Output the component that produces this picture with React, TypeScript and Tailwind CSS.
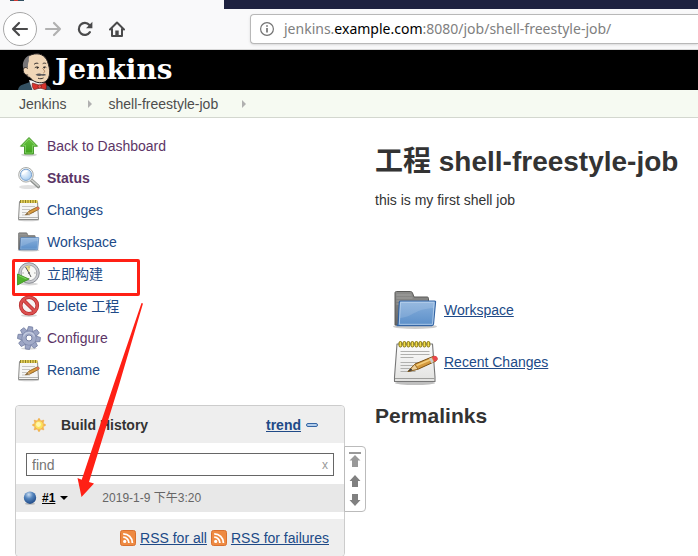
import React from "react";

const cjk = "font-['Liberation_Sans','Noto_Sans_CJK_SC',sans-serif]";

function BackIcon() {
  return (
    <svg width="18" height="16" viewBox="0 0 18 16" fill="none" stroke="currentColor" strokeWidth="2.2" strokeLinecap="round" strokeLinejoin="round">
      <path d="M16 8H2M8 2L2 8l6 6" />
    </svg>
  );
}

function ForwardIcon() {
  return (
    <svg width="18" height="16" viewBox="0 0 18 16" fill="none" stroke="currentColor" strokeWidth="2.2" strokeLinecap="round" strokeLinejoin="round">
      <path d="M2 8h14M10 2l6 6-6 6" />
    </svg>
  );
}

function ReloadIcon() {
  return (
    <svg width="16" height="16" viewBox="0 0 16 16" fill="none" stroke="currentColor" strokeWidth="2.2">
      <path d="M12.9 11.2A6 6 0 1 1 12.4 4" strokeLinecap="round" />
      <path d="M15.4 .8v6.400H9z" fill="currentColor" stroke="none" />
    </svg>
  );
}

function HomeIcon() {
  return (
    <svg width="16" height="16" viewBox="0 0 16 16" fill="none" stroke="currentColor" strokeWidth="2" strokeLinejoin="round" strokeLinecap="round">
      <path d="M1 8.500L8 1.500l7 7M3 8v7h10V8" />
      <path d="M6.300 14.500V9.500h3.400v5z" fill="currentColor" stroke="none" />
    </svg>
  );
}

function InfoIcon() {
  return (
    <svg width="14" height="14" viewBox="0 0 14 14" fill="none" stroke="#737373">
      <circle cx="7" cy="7" r="6.400" strokeWidth="1.200" />
      <path d="M7 6v4.500M7 3.300v1.500" strokeWidth="1.700" />
    </svg>
  );
}

function Butler() {
  return (
    <svg width="34" height="37" viewBox="0 0 34 37" aria-hidden="true">
      <path d="M0 37c.5-3 2-4.500 5-5.500L12 29l14 2.500c4 .5 6.500 2.500 7 5.500z" fill="#335061" />
      <path d="M11 27l3.500 10H27l1-7z" fill="#f5f5f5" />
      <path d="M7 20C4 12 6 4 14 1.500c7-2 13 .5 15.500 7 1.500 4.500 2.500 8 2 12.500-.5 5-3.500 8.500-8 8.700-5 .3-9-1.700-11.500-5.200C9.500 24 8 22.500 7 20z" fill="#f0d6b7" stroke="#231f20" strokeWidth="1" />
      <path d="M5.200 15C4 10 6 4.500 11.500 2.200c-.5 2-1 3.800-.6 5.800-.8 2-1.200 4-.9 6.200l-1.500.2-2 1.800z" fill="#777577" />
      <path d="M10 15.500c-2.500-2-5-.8-4.700 2.200.3 3 2.300 4.600 4.900 4.400" fill="#f0d6b7" stroke="#231f20" strokeWidth=".9" />
      <path d="M16 11.500c1-1.400 2.800-1.700 4.300-1M24.700 10.700c1-.8 2.400-.8 3.500 0M16.800 14.800c1.400-1.200 3-1.100 4.200-.1M25 14.600c1-.9 2.300-.9 3.300-.1" fill="none" stroke="#231f20" strokeWidth=".9" />
      <circle cx="19.400" cy="14.900" r=".8" fill="#231f20" />
      <circle cx="26.300" cy="14.800" r=".8" fill="#231f20" />
      <path d="M24.500 15.500c2 1.800 3 3.400 1 4.500" fill="none" stroke="#a87c58" strokeWidth="1" />
      <path d="M17.500 21.800c2-1.400 4.300-1.600 6.500-.6 2-.6 3.500-.2 4.300.9-1.700.8-3 .9-4.500.5-2 .7-4.300.4-6.300-.8z" fill="#5c5a5c" />
      <path d="M20 25.200c2 .8 4 .6 5.500-.3" fill="none" stroke="#231f20" strokeWidth=".9" />
      <path d="M14.500 30l7 2.200 6-2.400c1.200 2 1.200 4.400.5 7L22 35l-6 1.800c-1.500-2-2.300-4.600-1.500-6.800z" fill="#d8322c" stroke="#5d1514" strokeWidth=".6" />
      <circle cx="21.700" cy="33.500" r="1.800" fill="#f0544e" stroke="#5d1514" strokeWidth=".6" />
    </svg>
  );
}

type IconProps = { size: number };

function UpArrowIcon({ size }: IconProps) {
  return (
    <svg width={size} height={size} viewBox="0 0 24 24">
      <defs>
        <linearGradient id="green" x1="0" y1="0" x2="0" y2="1">
          <stop offset="0" stopColor="#6cc644" />
          <stop offset="1" stopColor="#3da01c" />
        </linearGradient>
      </defs>
      <ellipse cx="12" cy="20.800" rx="8" ry="1.600" fill="#000" opacity=".18" />
      <path d="M12 3.500l8.500 8.700H16.500V20h-9v-7.800H3.500z" fill="url(#green)" stroke="#4a9a2e" strokeLinejoin="round" />
      <path d="M12 5l6.200 6.300H15.500V19h-7v-7.700H5.800z" fill="none" stroke="#8fdc74" strokeWidth=".7" />
    </svg>
  );
}

function SearchIcon({ size }: IconProps) {
  return (
    <svg width={size} height={size} viewBox="0 0 24 24">
      <defs>
        <radialGradient id="lens" cx=".35" cy=".3" r=".8">
          <stop offset="0" stopColor="#fff" />
          <stop offset="1" stopColor="#9cc6ee" />
        </radialGradient>
      </defs>
      <ellipse cx="11" cy="21" rx="9" ry="2" fill="#000" opacity=".12" />
      <path d="M14.500 14.200l6.800 6.300" stroke="#8c908d" strokeWidth="3.600" strokeLinecap="round" />
      <path d="M14.500 13.800l6.800 6.200" stroke="#cfd1ce" strokeWidth="1.600" strokeLinecap="round" />
      <circle cx="9" cy="8.800" r="7.300" fill="#f4f5f4" stroke="#a9aba8" />
      <circle cx="9" cy="8.800" r="5.600" fill="url(#lens)" stroke="#7ba3d0" />
      <path d="M5.500 8.500C6 6 8 4.800 10.500 5.300" fill="none" stroke="#fff" strokeWidth="1.500" />
    </svg>
  );
}

function SmallNotepadIcon({ size }: IconProps) {
  return (
    <svg width={size} height={size} viewBox="0 0 24 24">
      <ellipse cx="11.500" cy="22.300" rx="10.500" ry="1" fill="#000" opacity=".2" />
      <path d="M2.500 3.500h18l1 18h-20z" fill="#f5f5f4" stroke="#8c8c8a" strokeLinejoin="round" />
      <path d="M2 19.500h19" stroke="#b5b5b3" />
      <path d="M5 8.500h13M5 11.500h8M5 14.500h12M5 17h8" stroke="#c4c4c2" />
      <path d="M3 3.500h17.500" stroke="#e3cf58" strokeWidth="3" />
      <path d="M3 3.500h17.500" stroke="#8e7f22" strokeWidth="3" strokeDasharray="1 1.500" />
      <path d="M8.500 16.800l3.500-3.700 8-4c1.800-.8 3 1.500 1.300 2.500l-8.200 4.300z" fill="#d99c40" stroke="#855718" strokeWidth=".8" strokeLinejoin="round" />
      <path d="M8.500 16.800l3.200-3.400 1.500 2.400z" fill="#c9a672" />
      <path d="M8.500 16.800l2-1.500.5.800z" fill="#333" />
      <path d="M19.500 9.300c1.800-1.200 3.700.9 1.900 2.200l-1 .6z" fill="#e06a5a" />
    </svg>
  );
}

function NotepadIcon({ size }: IconProps) {
  return (
    <svg width={size} height={size} viewBox="0 0 48 48">
      <defs>
        <linearGradient id="paper" x1="0" y1="0" x2="0" y2="1">
          <stop offset="0" stopColor="#fcfcfc" />
          <stop offset="1" stopColor="#e2e2e0" />
        </linearGradient>
      </defs>
      <ellipse cx="23" cy="45" rx="20" ry="2" fill="#000" opacity=".25" />
      <path d="M5 6h35.500l2.500 33v4.500H2.500V39z" fill="url(#paper)" stroke="#777" strokeWidth="1.100" strokeLinejoin="round" />
      <path d="M3 40.500h39.500" stroke="#9d9d9b" />
      <path d="M8.500 13.500h29M8.500 16.500h29M8.500 19.500h13M8.500 24.500h29M8.500 27.500h22M8.500 30.500h16M8.500 33.500h15" stroke="#b0b0ae" />
      <g fill="#f1dc4c" stroke="#80700a">
        {[7, 11, 15, 19, 23, 27, 31, 35].map((x) => (
          <rect key={x} x={x} y="3.500" width="2.800" height="5.500" rx="1.400" />
        ))}
      </g>
      <path d="M16 33.500l7-7.500 18-7.500c3.500-1.200 5.500 3 2.600 4.700L26.500 31z" fill="#d59a3e" stroke="#7a4f12" strokeWidth="1" strokeLinejoin="round" />
      <path d="M24.500 27.500L40 21" stroke="#f3cd7b" strokeWidth="1.500" />
      <path d="M16 33.500l6.800-7.200 3.200 4.900z" fill="#edcf9a" stroke="#8c6121" strokeWidth=".8" />
      <path d="M16 33.500l3-3.200 1.400 2z" fill="#333" />
      <path d="M38.300 20l2.300 4.600" stroke="#ccc" strokeWidth="2.500" />
      <path d="M40 19l2-.9c3.200-1.200 5 2.900 2.300 4.600l-2 1.100z" fill="#e8474d" />
    </svg>
  );
}

function FolderIcon({ size }: IconProps) {
  return (
    <svg width={size} height={size} viewBox="0 0 48 48">
      <defs>
        <linearGradient id="folder" x1="0" y1="0" x2="0" y2="1">
          <stop offset="0" stopColor="#89b0dc" />
          <stop offset="1" stopColor="#5b8fc9" />
        </linearGradient>
        <linearGradient id="folderBack" x1="0" y1="0" x2="0" y2="1">
          <stop offset="0" stopColor="#8c8c8a" />
          <stop offset="1" stopColor="#666" />
        </linearGradient>
      </defs>
      <ellipse cx="23" cy="40.500" rx="22" ry="2.500" fill="#000" opacity=".2" />
      <path d="M3 39V7c0-1 .5-1.500 1.500-1.500h14c1 0 1.500.5 2 1.500l1.500 4h13c1 0 1.500.5 1.500 1.500V39z" fill="url(#folderBack)" stroke="#5b5b59" />
      <path d="M4.500 9h15M4.500 12h16M4.500 15h31M4.500 18h31" stroke="#b0b0ae" strokeWidth=".7" />
      <path d="M8.500 15h34c1 0 1.200.6 1 1.500L41.500 38c-.1 1-.6 1.600-1.700 1.600H4.500c1 0 1.500-.6 1.600-1.600l1.200-21.600c0-.9.400-1.400 1.200-1.400z" fill="url(#folder)" stroke="#3465a4" strokeWidth="1.200" />
      <path d="M8.500 16.300h33.700L40.500 38.300H7.300z" fill="none" stroke="#bcd4ee" strokeWidth=".8" />
      <path d="M8 32c13-1 14-9 34-10l-.5-5.500H8.700z" fill="#fff" opacity=".13" />
    </svg>
  );
}

function ClockIcon({ size }: IconProps) {
  return (
    <svg width={size} height={size} viewBox="0 0 24 24">
      <ellipse cx="12" cy="22" rx="9" ry="1.500" fill="#000" opacity=".15" />
      <circle cx="12" cy="11" r="10.300" fill="#c9cacf" stroke="#8c8f96" />
      <circle cx="12" cy="11" r="7.800" fill="#f7f7f5" stroke="#a3a5ab" />
      <path d="M12 11L8.500 4.300A7.500 7.500 0 0 1 13.500 3.700z" fill="#ecdf8a" />
      <path d="M12 4.500v1.200M18.500 11h-1.200M12 17.500v-1.200M5.500 11h1.200" stroke="#888" />
      <path d="M8.500 5l3.500 6 2 4" stroke="#555" fill="none" />
      <circle cx="12" cy="11" r="1.100" fill="#666" />
      <path d="M.5 12l11.500 5L.5 23z" fill="#4fb12c" stroke="#3a8e1e" strokeLinejoin="round" strokeWidth=".8" />
      <path d="M1.500 13.500l8 3.500" stroke="#8cdb70" strokeWidth=".8" />
    </svg>
  );
}

function DeleteIcon({ size }: IconProps) {
  return (
    <svg width={size} height={size} viewBox="0 0 24 24">
      <ellipse cx="12" cy="21.500" rx="8" ry="1.500" fill="#000" opacity=".16" />
      <circle cx="12" cy="11.500" r="8.300" fill="#f6f3f3" stroke="#b52a2a" strokeWidth="3.600" />
      <path d="M6.200 5.700l11.600 11.600" stroke="#b52a2a" strokeWidth="3.600" />
      <circle cx="12" cy="11.500" r="8.300" fill="none" stroke="#dc5050" strokeWidth="2.200" />
      <path d="M6.200 5.700l11.600 11.600" stroke="#dc5050" strokeWidth="2.200" />
    </svg>
  );
}

function GearIcon({ size }: IconProps) {
  const teeth = [0, 45, 90, 135, 180, 225, 270, 315];
  return (
    <svg width={size} height={size} viewBox="0 0 24 24">
      <ellipse cx="12" cy="22.500" rx="8" ry="1.200" fill="#000" opacity=".15" />
      <g fill="#9ca5c4" stroke="#7580a3" strokeWidth=".8" strokeLinejoin="round">
        {teeth.map((angle) => (
          <path key={angle} d="M8.900 6.500l1-5.800h4.200l1 5.800z" transform={`rotate(${angle + 8} 12 12)`} />
        ))}
        <circle cx="12" cy="12" r="7" />
      </g>
      <circle cx="12" cy="12" r="6.800" fill="#a2abc8" />
      <path d="M6.500 10.500A5.800 5.800 0 0 1 17.500 10.500" fill="none" stroke="#c5cce0" strokeWidth="1.200" />
      <circle cx="12" cy="12" r="3" fill="#fff" stroke="#7580a3" />
    </svg>
  );
}

function SunIcon() {
  const rays = [0, 45, 90, 135, 180, 225, 270, 315];
  return (
    <svg width="16" height="16" viewBox="0 0 16 16">
      {rays.map((angle) => (
        <path key={angle} d="M6.500 3.400L8 1l1.500 2.400z" fill="#f5b444" stroke="#f0a840" strokeWidth=".4" transform={`rotate(${angle} 8 8)`} />
      ))}
      <circle cx="8" cy="8" r="4.400" fill="#fce35a" stroke="#f4b455" />
      <circle cx="7.500" cy="7.500" r="2.400" fill="#fff6b0" />
    </svg>
  );
}

function BallIcon() {
  return (
    <svg width="14" height="14" viewBox="0 0 14 14">
      <defs>
        <radialGradient id="ball" cx=".4" cy=".25" r=".75">
          <stop offset="0" stopColor="#c9dcf0" />
          <stop offset=".45" stopColor="#5384bd" />
          <stop offset="1" stopColor="#204a87" />
        </radialGradient>
      </defs>
      <ellipse cx="7" cy="12.800" rx="5" ry="1" fill="#000" opacity=".2" />
      <circle cx="7" cy="6.700" r="6.200" fill="url(#ball)" />
    </svg>
  );
}

function RssIcon() {
  return (
    <svg width="16" height="16" viewBox="0 0 16 16">
      <rect x=".5" y=".5" width="15" height="15" rx="2" fill="#ee8a42" stroke="#d9702f" />
      <circle cx="4.700" cy="11.400" r="1.600" fill="#fff" />
      <path d="M3.200 7.200a5.700 5.700 0 0 1 5.700 5.700M3.200 3.800a9.200 9.200 0 0 1 9.200 9.100" fill="none" stroke="#fff" strokeWidth="1.800" />
    </svg>
  );
}

function Separator() {
  return (
    <svg width="4" height="8" viewBox="0 0 4 8" aria-hidden="true">
      <path d="M0 0l4 4-4 4z" fill="#b0b0b0" />
    </svg>
  );
}

type Task = { label: string; icon: (props: IconProps) => React.ReactElement; tone: string; marked?: boolean };

const tasks: Task[] = [
  { label: "Back to Dashboard", icon: UpArrowIcon, tone: "text-[#5c3566]" },
  { label: "Status", icon: SearchIcon, tone: "text-[#5c3566] font-bold" },
  { label: "Changes", icon: SmallNotepadIcon, tone: "text-[#204a87]" },
  { label: "Workspace", icon: FolderIcon, tone: "text-[#204a87]" },
  { label: "立即构建", icon: ClockIcon, tone: "text-[#204a87]", marked: true },
  { label: "Delete 工程", icon: DeleteIcon, tone: "text-[#204a87]" },
  { label: "Configure", icon: GearIcon, tone: "text-[#5c3566]" },
  { label: "Rename", icon: SmallNotepadIcon, tone: "text-[#204a87]" },
];

function BrowserChrome() {
  return (
    <header>
      <div className="flex h-[9px] bg-[#1e2240]">
        <div className="w-56 shrink-0 bg-[#f9f9fa] pl-[10px]">
          <div className="flex h-px w-[14px] bg-[#335061]">
            <span className="ml-1 w-1 bg-[#d33833]" />
          </div>
        </div>
      </div>
      <div className="flex h-[41px] items-center border-b border-[#d8d8d8] bg-[#f9f9fa] pl-[3px] text-[#4a4a4b]">
        <button aria-label="Back" className="flex size-[34px] shrink-0 items-center justify-center rounded-full border border-[#a8a8a8] bg-white">
          <BackIcon />
        </button>
        <button aria-label="Forward" className="flex w-8 shrink-0 justify-center text-[#b1b1b1]">
          <ForwardIcon />
        </button>
        <button aria-label="Reload" className="flex w-8 shrink-0 justify-center">
          <ReloadIcon />
        </button>
        <button aria-label="Home" className="flex w-8 shrink-0 justify-center">
          <HomeIcon />
        </button>
        <div className="ml-[117px] flex h-[30px] flex-1 items-center gap-[10px] overflow-hidden rounded-l-sm border border-r-0 border-[#b8b8b8] bg-white pl-[9px] shadow-sm">
          <InfoIcon />
          <div
            role="textbox"
            aria-label="Address"
            contentEditable
            suppressContentEditableWarning
            className="flex-1 whitespace-nowrap font-['Noto_Sans',sans-serif] text-[14px] leading-5 text-[#808080] outline-none"
          >
            jenkins.<span className="text-black">example.com</span>:8080/job/shell-freestyle-job/
          </div>
        </div>
      </div>
    </header>
  );
}

function BuildHistory() {
  return (
    <section className="relative mt-[19px] ml-[15px] rounded border border-[#ccc] bg-white">
      <div className="flex h-[37px] items-center rounded-t bg-[#eee] pr-[26px] pl-[15px] font-bold">
        <SunIcon />
        <h2 className="ml-[14px] flex-1">Build History</h2>
        <a href="#trend" className="text-[#204a87] underline">trend</a>
        <button aria-label="Collapse" className="ml-[5px] h-1 w-3 rounded-xs border border-[#3465a4] bg-[#b3cdea]" />
      </div>
      <div className="relative px-[10px] pt-[10px] pb-2">
        <input
          aria-label="find"
          placeholder="find"
          className="block h-[23px] w-full border border-[#666] bg-white pr-6 pl-[5px] text-[14px] placeholder:text-[#757575]"
        />
        <button aria-label="Clear" className="absolute top-[13px] right-4 text-[12px] leading-[18px] text-[#999]">x</button>
      </div>
      <div className="flex h-7 items-center bg-[#e8e8e8] pl-[7px]">
        <BallIcon />
        <a href="#1" className="ml-[5px] text-[12px] font-bold text-black underline">#1</a>
        <button aria-label="Build menu" className="ml-[5px]">
          <svg width="8" height="4" viewBox="0 0 8 4">
            <path d="M0 0h8L4 4z" fill="#000" />
          </svg>
        </button>
        <time className="ml-[34px] text-[12px] text-[#666]">2019-1-9 下午3:20</time>
      </div>
      <div className="mt-[7px] flex h-[37px] items-center justify-end gap-1 rounded-b bg-[#eee] pr-[15px]">
        <RssIcon />
        <a href="#all" className="text-[#204a87] underline">RSS for all</a>
        <RssIcon />
        <a href="#failures" className="text-[#204a87] underline">RSS for failures</a>
      </div>
      <div className="absolute top-10 left-full flex h-[66px] w-[22px] flex-col items-center justify-between rounded-r border border-[#bbb] bg-white py-[5px] text-[#808080]">
        <button aria-label="Newest builds" className="text-[#999]">
          <svg width="12" height="15" viewBox="0 0 12 15" fill="currentColor" className="block">
            <path d="M0 0h12v2H0zM6 3l5.500 5.500H9V15H3V8.500H.5z" />
          </svg>
        </button>
        <button aria-label="Newer builds">
          <svg width="12" height="12" viewBox="0 0 12 12" fill="currentColor" className="block">
            <path d="M6 0l5.500 6H9v6H3V6H.5z" />
          </svg>
        </button>
        <button aria-label="Older builds">
          <svg width="12" height="12" viewBox="0 0 12 12" fill="currentColor" className="block">
            <path d="M6 12l5.500-6H9V0H3v6H.5z" />
          </svg>
        </button>
      </div>
    </section>
  );
}

export default function App() {
  return (
    <div className={`min-h-screen overflow-x-hidden bg-white text-[14px] leading-5 text-[#333] ${cjk}`}>
      <BrowserChrome />
      <div className="flex h-10 items-end bg-black pl-[18px]">
        <a href="#home" className="flex items-end text-white">
          <Butler />
          <span className="ml-[3px] font-['DejaVu_Serif',serif] text-[28px] leading-[40px] font-bold">Jenkins</span>
        </a>
      </div>
      <nav className="flex h-7 items-center border-b border-[#d3d7cf] bg-[#f6faf2] pl-[19px] text-[#4d4d4d]">
        <a href="#jenkins" className="mr-[22px]">Jenkins</a>
        <Separator />
        <a href="#job" className="mr-6 ml-4">shell-freestyle-job</a>
        <Separator />
      </nav>
      <div className="flex">
        <aside className="relative w-[345px] shrink-0 pt-3">
          <ul>
            {tasks.map(({ label, icon: Icon, tone, marked }) => (
              <li key={label} className="relative flex h-8 items-center gap-[6px] pl-[17px]">
                <Icon size={24} />
                <a href={`#${label}`} className={tone}>{label}</a>
                {marked && <span className="pointer-events-none absolute top-px left-3 h-[37px] w-32 rounded-xs border-3 border-[#ff2015]" />}
              </li>
            ))}
          </ul>
          <BuildHistory />
          <svg className="pointer-events-none absolute top-[184px] left-[76px]" width="68" height="196" viewBox="76 302 68 196">
            <path d="M141.500 303l1.500.5L119 385 89 482l5 1.500-12.500 13.500-4-19 4.200 1.800L113.500 385z" fill="#ff2015" />
          </svg>
        </aside>
        <main className="min-w-0 flex-1 pt-[26px] pl-[30px]">
          <h1 className="text-[28px] leading-9 font-bold whitespace-nowrap">工程 shell-freestyle-job</h1>
          <p className="mt-[10px]">this is my first shell job</p>
          <ul className="mt-[74px] ml-[17px]">
            <li className="flex h-[52px] items-center gap-1">
              <FolderIcon size={48} />
              <a href="#workspace" className="text-[#204a87] underline">Workspace</a>
            </li>
            <li className="flex h-[52px] items-center gap-1">
              <NotepadIcon size={48} />
              <a href="#changes" className="text-[#204a87] underline">Recent Changes</a>
            </li>
          </ul>
          <h2 className="mt-4 text-[21px] leading-6 font-bold">Permalinks</h2>
        </main>
      </div>
    </div>
  );
}
